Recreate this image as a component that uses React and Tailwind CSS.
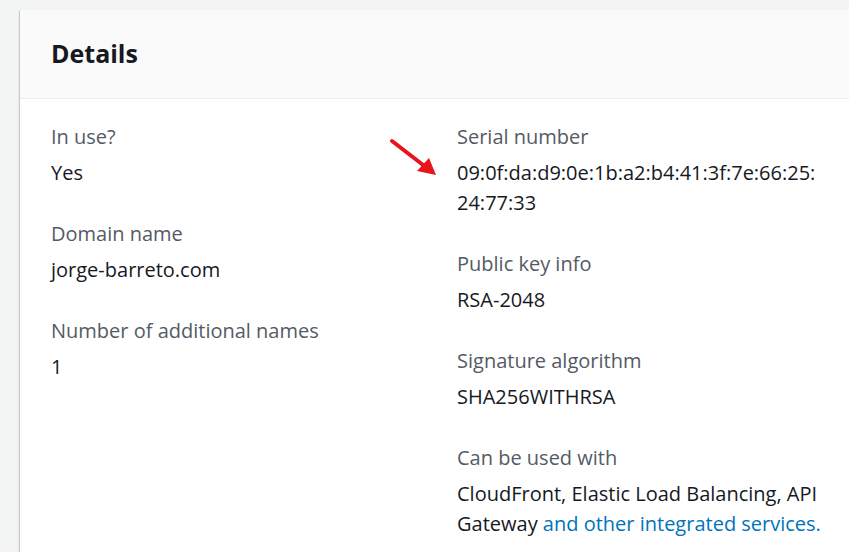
export default function App() {
  const Field = ({ label, children }) => (
    <div className="flex flex-col gap-[6px]">
      <div className="text-[#545b64] leading-[30px]">{label}</div>
      <div className="text-[#16191f] leading-[30px]">{children}</div>
    </div>
  );
  return (
    <div
      className="w-[849px] h-[552px] overflow-hidden bg-[#f2f3f3] pt-[10px] pl-[20px]"
      style={{ fontFamily: '"Open Sans", "Noto Sans", sans-serif' }}
    >
      <div className="w-[900px] h-[600px] bg-white shadow-[0_1px_1px_0_rgba(0,28,36,0.3),1px_1px_1px_0_rgba(0,28,36,0.15),-1px_1px_1px_0_rgba(0,28,36,0.15)]">
        <div className="h-[89px] bg-[#fafafa] border-b border-[#eaeded] flex items-center pl-[31px]">
          <h2 className="text-[25px] font-bold text-[#16191f]">Details</h2>
        </div>
        <div className="flex pl-[31px] pt-[23px] text-[20px]">
          <div className="w-[406px] flex flex-col gap-[31px]">
            <Field label="In use?">Yes</Field>
            <Field label="Domain name">jorge-barreto.com</Field>
            <Field label="Number of additional names">1</Field>
          </div>
          <div className="w-[385px] flex flex-col gap-[31px] relative">
            <svg
              className="absolute left-[-68px] top-[16px]"
              width="50"
              height="40"
              viewBox="0 0 50 40"
            >
              <line x1="3" y1="3" x2="38" y2="30" stroke="#e8141b" strokeWidth="4" strokeLinecap="round" />
              <polygon points="47,37 28,33 40,20" fill="#e8141b" />
            </svg>
            <Field label="Serial number">
              09:0f:da:d9:0e:1b:a2:b4:41:3f:7e:66:25:<wbr />24:77:33
            </Field>
            <Field label="Public key info">RSA-2048</Field>
            <Field label="Signature algorithm">SHA256WITHRSA</Field>
            <Field label="Can be used with">
              CloudFront, Elastic Load Balancing, API Gateway{" "}
              <a className="text-[#0073bb]">and other integrated services.</a>
            </Field>
          </div>
        </div>
      </div>
    </div>
  );
}
